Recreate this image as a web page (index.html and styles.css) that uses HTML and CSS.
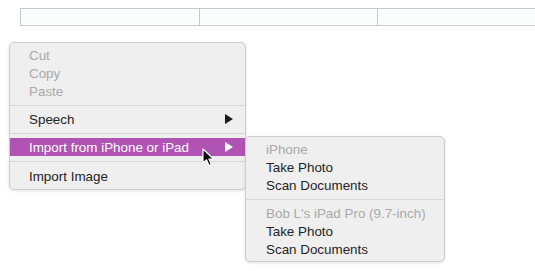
FILE: index.html
```html
<!DOCTYPE html>
<html>
<head>
<meta charset="utf-8">
<link rel="stylesheet" href="styles.css">
</head>
<body>
<div class="table">
  <div class="cell"></div>
  <div class="cell"></div>
  <div class="cell"></div>
</div>
<div class="menus">
  <div class="menu main">
    <div class="item disabled">Cut</div>
    <div class="item disabled">Copy</div>
    <div class="item disabled">Paste</div>
    <div class="sep"></div>
    <div class="item sub">Speech<span class="tri"></span></div>
    <div class="sep"></div>
    <div class="item sub active">Import from iPhone or iPad<span class="tri"></span></div>
    <div class="sep tall"></div>
    <div class="item">Import Image</div>
  </div>
  <div class="menu submenu">
    <div class="item disabled">iPhone</div>
    <div class="item">Take Photo</div>
    <div class="item">Scan Documents</div>
    <div class="sep"></div>
    <div class="item disabled">Bob L's iPad Pro (9.7-inch)</div>
    <div class="item">Take Photo</div>
    <div class="item">Scan Documents</div>
  </div>
  <svg class="cursor" width="14" height="20" viewBox="0 0 14 20">
    <path d="M1 1 L1 15 L4.5 11.8 L7 17.5 L9.3 16.5 L6.9 11 L11.5 11 Z" fill="#000" stroke="#fff" stroke-width="1.2" stroke-linejoin="round"/>
  </svg>
</div>
</body>
</html>
```
FILE: styles.css
```css
html, body {
  margin: 0;
  padding: 0;
  background: #ffffff;
}
body {
  width: 535px;
  height: 271px;
  overflow: hidden;
  font-family: "Liberation Sans", Arial, sans-serif;
  font-size: 13.4px;
  color: #242424;
}
.table {
  display: grid;
  grid-template-columns: 179px 178px 178px;
  margin: 8px 0 0 20px;
  height: 18px;
  border: 1px solid #c6c9c9;
  border-right: none;
  background: #fbfcfc;
  box-sizing: border-box;
  width: 540px;
}
.cell {
  border-right: 1px solid #c6c9c9;
}
.menus {
  position: relative;
  height: 240px;
}
.menu {
  position: absolute;
  background: #efefef;
  border: 1px solid #cdcdcd;
  border-radius: 5px;
  box-shadow: 0 1px 3px rgba(0,0,0,0.12);
  box-sizing: border-box;
  display: flex;
  flex-direction: column;
}
.main {
  left: 9px;
  top: 16px;
  width: 237px;
  padding: 3px 0 4px;
}
.main .item {
  padding-left: 19px;
}
.submenu {
  left: 245px;
  top: 110px;
  width: 200px;
  padding: 3px 0 3px;
}
.item {
  height: 18px;
  line-height: 19px;
  padding-left: 20px;
  position: relative;
  white-space: nowrap;
}
.disabled {
  color: #a9a9a9;
}
.active {
  background: #b152b5;
  color: #fff;
}
.sep {
  height: 10px;
  position: relative;
}
.sep.tall {
  height: 11px;
}
.sep::after {
  content: "";
  position: absolute;
  left: 0;
  right: 0;
  top: 5px;
  height: 1px;
  background: #d6d6d6;
}
.tri {
  position: absolute;
  right: 12px;
  top: 4px;
  width: 0;
  height: 0;
  border-top: 5px solid transparent;
  border-bottom: 5px solid transparent;
  border-left: 8px solid #1a1a1a;
}
.active .tri {
  border-left-color: #fff;
}
.cursor {
  position: absolute;
  left: 202px;
  top: 122px;
}
```
